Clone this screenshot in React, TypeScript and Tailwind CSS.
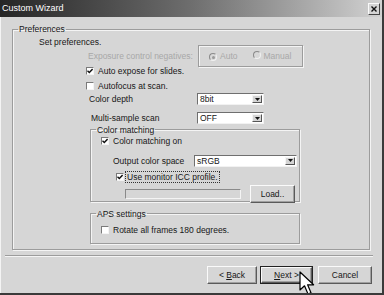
import type { ReactNode } from "react";

function Check({ checked }: { checked?: boolean }) {
  return (
    <span className="inline-flex h-[8px] w-[8px] shrink-0 items-center justify-center border-t border-l border-t-[#7a7a7a] border-l-[#7a7a7a] border-r border-b border-r-[#f4f4f4] border-b-[#f4f4f4] bg-white">
      {checked && (
        <svg width="6" height="6" viewBox="0 0 6 6">
          <path d="M0.5 2.8 L2.3 4.6 L5.6 1.1" stroke="#111" strokeWidth="1.4" fill="none" />
        </svg>
      )}
    </span>
  );
}

function Radio({ on }: { on?: boolean }) {
  return (
    <span className="inline-flex h-[8px] w-[8px] shrink-0 items-center justify-center rounded-full border border-t-[#8a8a8a] border-l-[#8a8a8a] border-r-[#f0f0f0] border-b-[#f0f0f0] bg-[#d8d8d8]">
      {on && <span className="h-[3px] w-[3px] rounded-full bg-[#9a9a9a]" />}
    </span>
  );
}

function Select({ value, width }: { value: string; width: string }) {
  return (
    <div
      className={`${width} flex h-[12px] items-center border border-t-[#6f6f6f] border-l-[#6f6f6f] border-r-[#f2f2f2] border-b-[#f2f2f2] bg-white`}
    >
      <span className="flex-1 pl-[2px] leading-[10px]">{value}</span>
      <span className="mr-[1px] flex h-[8px] w-[10px] items-center justify-center border border-t-[#f4f4f4] border-l-[#f4f4f4] border-r-[#555] border-b-[#555] bg-[#d4d4d4]">
        <svg width="5" height="3" viewBox="0 0 5 3">
          <path d="M0 0 H5 L2.5 3 Z" fill="#111" />
        </svg>
      </span>
    </div>
  );
}

function Group({
  label,
  className,
  children,
}: {
  label: string;
  className: string;
  children: ReactNode;
}) {
  return (
    <fieldset
      className={`${className} border border-[#9c9c9c] shadow-[inset_1px_1px_0_#f4f4f4,1px_1px_0_#f4f4f4]`}
    >
      <legend className="ml-[5px] px-[1px] leading-[10px]">{label}</legend>
      {children}
    </fieldset>
  );
}

function Button({
  children,
  primary,
  className,
}: {
  children: ReactNode;
  primary?: boolean;
  className?: string;
}) {
  return (
    <div
      className={`${className ?? ""} ${
        primary ? "border border-[#222]" : ""
      } flex h-[18px] items-stretch`}
    >
      <div className="flex flex-1 items-center justify-center border border-t-[#fafafa] border-l-[#fafafa] border-r-[#5a5a5a] border-b-[#5a5a5a] bg-[#d6d6d6] shadow-[inset_-1px_-1px_0_#a0a0a0]">
        {children}
      </div>
    </div>
  );
}

export default function App() {
  return (
    <div
      className="relative flex h-[295px] w-[384px] flex-col overflow-hidden border-r-2 border-b-2 border-r-[#3a3a3a] border-b-[#3a3a3a] bg-[#d6d6d6] text-[8.5px] text-[#161616]"
      style={{ fontFamily: '"Liberation Sans", Arial, sans-serif' }}
    >
      {/* title bar */}
      <div className="flex h-[17px] shrink-0 items-center bg-gradient-to-r from-[#262626] via-[#6e6e6e] to-[#d2d2d2] pl-[2px] pr-[2px]">
        <span className="flex-1 text-[9px] leading-none text-white">Custom Wizard</span>
        <span className="flex h-[12px] w-[12px] items-center justify-center border border-t-[#fafafa] border-l-[#fafafa] border-r-[#444] border-b-[#444] bg-[#d4d4d4]">
          <svg width="6" height="6" viewBox="0 0 6 6">
            <path d="M0.5 0.5 L5.5 5.5 M5.5 0.5 L0.5 5.5" stroke="#111" strokeWidth="1.4" />
          </svg>
        </span>
      </div>

      <div className="flex flex-1 flex-col border-l border-l-[#f4f4f4]">
        <Group label="Preferences" className="mt-[7px] ml-[11px] h-[226px] w-[358px]">
          <div className="flex flex-col">
            <div className="mt-[3px] ml-[26px] leading-[10px]">Set preferences.</div>

            <div className="mt-[-2px] flex items-center">
              <span className="ml-[75px] w-[110px] text-[#a8a8a8]">Exposure control negatives:</span>
              <div className="flex h-[22px] w-[105px] items-center border border-[#9c9c9c] shadow-[inset_1px_1px_0_#f4f4f4,1px_1px_0_#f4f4f4] text-[#a8a8a8]">
                <span className="ml-[10px]"><Radio on /></span>
                <span className="ml-[3px]">Auto</span>
                <span className="ml-[15px]"><Radio /></span>
                <span className="ml-[3px]">Manual</span>
              </div>
            </div>

            <div className="mt-[-1px] ml-[73px] flex items-center gap-[4px] leading-[10px]">
              <Check checked />
              <span>Auto expose for slides.</span>
            </div>
            <div className="mt-[5px] ml-[73px] flex items-center gap-[4px] leading-[10px]">
              <Check />
              <span>Autofocus at scan.</span>
            </div>

            <div className="mt-[2px] flex items-center">
              <span className="ml-[76px] w-[108px]">Color depth</span>
              <Select value="8bit" width="w-[67px]" />
            </div>
            <div className="mt-[6px] flex items-center">
              <span className="ml-[78px] w-[106px]">Multi-sample scan</span>
              <Select value="OFF" width="w-[67px]" />
            </div>

            <Group label="Color matching" className="mt-[0px] ml-[77px] h-[77px] w-[210px]">
              <div className="flex flex-col">
                <div className="mt-[1px] ml-[10px] flex items-center gap-[4px] leading-[10px]">
                  <Check checked />
                  <span>Color matching on</span>
                </div>
                <div className="mt-[9px] flex items-center">
                  <span className="ml-[22px] w-[81px]">Output color space</span>
                  <Select value="sRGB" width="w-[103px]" />
                </div>
                <div className="mt-[4px] ml-[25px] flex items-center gap-[1px] leading-[10px]">
                  <Check checked />
                  <span className="border border-dotted border-[#333] px-[1px]">Use monitor ICC profile.</span>
                </div>
                <div className="mt-[2px] flex items-center">
                  <div className="ml-[34px] h-[10px] w-[116px] border border-t-[#8a8a8a] border-l-[#8a8a8a] border-r-[#f4f4f4] border-b-[#f4f4f4] bg-[#d6d6d6]" />
                  <Button className="ml-[9px] h-[13px] w-[45px]">Load..</Button>
                </div>
              </div>
            </Group>

            <Group label="APS settings" className="mt-[7px] ml-[77px] h-[35px] w-[210px]">
              <div className="mt-[6px] ml-[10px] flex items-center gap-[4px] leading-[10px]">
                <Check />
                <span>Rotate all frames 180 degrees.</span>
              </div>
            </Group>
          </div>
        </Group>

        <div className="mt-[5px] ml-[4px] h-[2px] w-[368px] border-t border-b border-t-[#9c9c9c] border-b-[#f4f4f4]" />

        <div className="mt-[9px] flex">
          <Button className="ml-[206px] w-[50px]">
            <span>
              &lt; <u>B</u>ack
            </span>
          </Button>
          <Button primary className="ml-[3px] w-[53px]">
            <span>
              <u>N</u>ext &gt;
            </span>
          </Button>
          <Button className="ml-[5px] w-[54px]">Cancel</Button>
        </div>
      </div>

      {/* mouse pointer over Next */}
      <svg
        className="absolute left-[299px] top-[271px]"
        width="20"
        height="26"
        viewBox="0 0 20 26"
      >
        <path
          d="M1 1 L1 19 L5.5 14.8 L9 23 L12 21.7 L8.6 13.8 L14.6 13.8 Z"
          fill="#fff"
          stroke="#000"
          strokeWidth="1.2"
          strokeLinejoin="round"
        />
      </svg>
    </div>
  );
}
